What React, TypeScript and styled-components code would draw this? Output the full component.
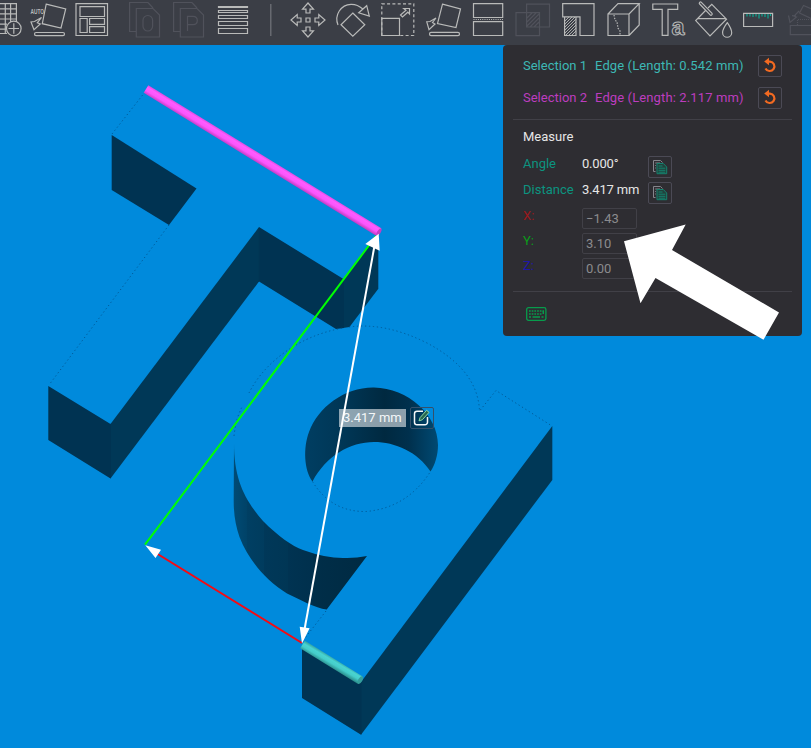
import React from "react";
import styled, { createGlobalStyle } from "styled-components";

const GlobalStyle = createGlobalStyle`
  * { box-sizing: border-box; }
  body { margin: 0; background: #008adc; overflow: hidden; font-family: Roboto, "Noto Sans", sans-serif; }
`;

const Screen = styled.div`
  width: 811px;
  height: 748px;
  display: flex;
  flex-direction: column;
  overflow: hidden;
`;

const Toolbar = styled.header`
  display: flex;
  flex: 0 0 45px;
  background: #3b3e46;
`;

const ToolIcon = styled.svg<{ $dim?: boolean; $gap?: number }>`
  flex: none;
  display: block;
  margin-left: ${(p) => p.$gap ?? 0}px;
  fill: none;
  stroke: ${(p) => (p.$dim ? "#50525b" : "#b9bab9")};
  stroke-width: 1.2;
  overflow: hidden;
`;

const Viewport = styled.main`
  position: relative;
  flex: 1;
  background: #008adc;
`;

const Scene = styled.svg`
  display: block;
`;

const Panel = styled.section`
  position: absolute;
  top: 0;
  left: 503px;
  width: 299px;
  height: 291px;
  padding: 10px 10px 0;
  background: #2e2d32;
  border-radius: 4px;
  color: #e6e6e6;
  font-size: 13px;
  line-height: 22px;
`;

const SelectionRow = styled.div<{ $color: string }>`
  display: flex;
  height: 22px;
  margin-bottom: 10px;
  padding: 0 10px;
  color: ${(p) => p.$color};
`;

const SelectionName = styled.span`
  width: 72px;
`;

const SelectionValue = styled.span`
  flex: 1;
  white-space: nowrap;
  letter-spacing: 0.12px;
`;

const IconButton = styled.button`
  display: grid;
  place-items: center;
  width: 24px;
  height: 22px;
  padding: 0;
  border: 1px solid #4b4a55;
  border-radius: 2px;
  background: transparent;
`;

const Divider = styled.div`
  height: 1px;
  background: #414047;
`;

const Title = styled.h2`
  margin: 6px 10px 5px;
  font-size: 13px;
  font-weight: 400;
  line-height: 22px;
`;

const MeasureRow = styled.div`
  display: grid;
  grid-template-columns: 59px 66px 24px;
  height: 26px;
  padding-left: 10px;
  ${IconButton} { margin-top: 3px; }
`;

const MeasureName = styled.span`
  color: #0c9480;
`;

const Value = styled.span`
  white-space: nowrap;
  letter-spacing: -0.2px;
`;

const AxisGroup = styled.div`
  padding: 3px 0 8px;
`;

const AxisRow = styled.div<{ $color: string }>`
  display: grid;
  grid-template-columns: 59px 55px;
  height: 25px;
  padding-left: 10px;
  color: ${(p) => p.$color};
`;

const AxisName = styled.span`
  line-height: 16px;
`;

const AxisInput = styled.div`
  height: 21px;
  padding-left: 3px;
  border: 1px solid #414047;
  border-radius: 2px;
  color: #8b8b8e;
  line-height: 20px;
`;

const Footer = styled.footer`
  padding: 15px 0 0 13px;
  svg { display: block; }
`;

const DistanceTag = styled.div`
  position: absolute;
  top: 362px;
  left: 339px;
  display: flex;
  align-items: center;
  gap: 4px;
`;

const DistanceText = styled.span`
  width: 67px;
  height: 18px;
  padding-left: 4px;
  background: rgba(255, 255, 255, 0.55);
  color: #f4f7f8;
  font-size: 13px;
  line-height: 17px;
  white-space: nowrap;
`;

const EditButton = styled(IconButton)`
  border-color: #35506a;
`;

const Overlay = styled.svg`
  position: absolute;
  inset: 0;
  pointer-events: none;
`;

function Tool(props: { x: number; w?: number; dim?: boolean; gap?: number; children: React.ReactNode }) {
  const w = props.w ?? 45;
  return (
    <ToolIcon width={w} height={45} viewBox={`${props.x} 0 ${w} 45`} $dim={props.dim} $gap={props.gap}>
      {props.children}
    </ToolIcon>
  );
}

function Tools() {
  return (
    <Toolbar>
      <Tool x={0} w={26}>
        <path d="M0 3.7H16.4V22M0 8.8H16M0 13.9H16M0 19H16M0 24.2H7M0 29.2H6M0 33.5H7M5.3 4V33M10.6 4V22" />
        <circle cx="13.8" cy="28.5" r="7.3" />
        <path d="M8.5 28.5H19M13.8 23.2V33.8" />
      </Tool>
      <Tool x={26}>
        <text x="30.5" y="14" fontSize="6.5" fontWeight="700" textLength="13.5" lengthAdjust="spacingAndGlyphs" fill="#b9bab9" stroke="none" fontFamily="Liberation Sans">AUTO</text>
        <path d="M46.2 4.2L65.7 9 61 28 42.3 23.7ZM31 22L34 29.7 40.3 24 37.3 22.8 41.5 17.5 34.5 21.5Z" />
        <rect x="34.5" y="32.5" width="30" height="3.2" rx="1.6" />
      </Tool>
      <Tool x={71}>
        <path d="M76 3.6H107.5V35.5H76ZM80 6.6H104.5V16.5H80ZM80 18.5H87.2V32.5H80ZM89.6 18.5H104.5V24.4H89.6ZM89.6 26.6H104.5V32.5H89.6Z" />
      </Tool>
      <Tool x={123} w={44} gap={7} dim>
        <path d="M136 31.5H129.6V2.5H148L153 8M136.3 8.5H153L159.5 15V37H136.3Z" />
        <rect x="143" y="15.5" width="9.6" height="15.5" rx="4.8" />
      </Tool>
      <Tool x={167} w={44} dim>
        <path d="M180 31.5H173.6V2.5H192L197 8M180.3 8.5H197L203.5 15V37H180.3ZM187.5 31V16.3H193Q197.3 16.3 197.3 20.4T193 24.6H187.5" />
      </Tool>
      <Tool x={211} w={44}>
        <path d="M218.5 6.5H247.5V7.5H218.5ZM218.5 10.5H247.5V12.5H218.5ZM218.5 15.5H247.5V18.5H218.5ZM218.5 21.5H247.5V25.5H218.5ZM218.5 28.5H247.5V33.5H218.5Z" />
      </Tool>
      <Tool x={255} w={31}>
        <path d="M270.8 4V36" stroke="#73757b" />
      </Tool>
      <Tool x={286}>
        <path d="M306 18H310V22H306ZM306 13V9.2H302.5L308 3 313.5 9.2H310V13ZM306 27V30.8H302.5L308 37 313.5 30.8H310V27ZM301 18H297.2V14.5L291 20 297.2 25.5V22H301ZM315 18H318.8V14.5L325 20 318.8 25.5V22H315Z" />
      </Tool>
      <Tool x={331}>
        <path d="M338 25C334 15 341 4.5 351 4.3 355 4.2 359 5.5 362.5 8.8M366.7 5.7L369.3 16 358.7 12.7ZM352.8 13L364.8 24.8 352.8 36.2 341 24.8Z" />
      </Tool>
      <Tool x={376}>
        <rect x="381.8" y="3.8" width="32" height="31.7" strokeDasharray="3 2.3" />
        <path d="M381.8 18.4H399.5V35.5H381.8ZM400.5 15L406 10.2 403.8 8.5H409.5V14L407.8 12.2 402.5 17Z" />
      </Tool>
      <Tool x={421}>
        <path d="M442.5 4.2L460.5 9 456 27.5 437.5 23.5ZM426.7 21.7L429 29.7 435 24 432.5 22.5 436 18 430 21.5Z" />
        <rect x="429.5" y="32.4" width="30" height="3.2" rx="1.6" />
      </Tool>
      <Tool x={466}>
        <path d="M473.5 3.7H502.7V17.5H473.5ZM473.5 21.6H502.7V35.5H473.5Z" />
        <path d="M473.5 19.5H503" strokeDasharray="1 1.2" />
      </Tool>
      <Tool x={511} dim>
        <path d="M516 12.7H539.5V35.6H516ZM526.6 4.2H549.5V27H526.6ZM527 18L532 13M527 22L536 13M527 26L539 14M530 27L539 18M534 27L539 22" />
      </Tool>
      <Tool x={556}>
        <path d="M562.7 3.7H594V35.5H580V16.8H562.7ZM564.6 16.8H576V35.5H564.6Z" />
        <path d="M565 21L569 17M565 24L572 17M565 27L575 17M565 30L576 19M565 33L576 22M566 35L576 25M569 35L576 28M572 35L576 31" strokeWidth=".9" />
      </Tool>
      <Tool x={601}>
        <path d="M608 14H629V35.5H608ZM608 14L618 3.7H639.2L629 14M639.2 3.7V25L629 35.5" />
        <path d="M614 15L615 20 617 22 618 28 620 31V35" strokeDasharray="1.5 1.3" />
      </Tool>
      <Tool x={646}>
        <path d="M652.8 4H677.7V9.3H668V35.3H662.2V9.3H652.8Z" />
        <text x="671.5" y="35.4" fontSize="23" fontWeight="700" fontFamily="Liberation Sans" textLength="13" lengthAdjust="spacingAndGlyphs" strokeWidth="1">a</text>
      </Tool>
      <Tool x={691}>
        <path d="M706 10L695.7 20.6 710 35.8 726.5 19.2 711.8 4.3 708 8M697.5 18.6H726M727.3 22.7Q731.7 29 731.7 32.7A4.5 4.5 0 0 1 722.6 32.7Q722.6 29 727.3 22.7Z" />
        <path d="M700.5 3.2L711 14" strokeWidth="3.6" strokeLinecap="round" />
        <path d="M700.5 3.2L711 14" stroke="#3b3e46" strokeWidth="1.2" strokeLinecap="round" />
      </Tool>
      <Tool x={736}>
        <path d="M743.6 13.4H772.6V26.5H743.6Z" />
        <path d="M747 14V16.5M750 14V16.5M753 14V17M756 14V16.5M759 14V18.5M762 14V16.5M765 14V17M768 14V18.5M770.5 14V16" stroke="#0aa892" />
      </Tool>
      <Tool x={781} w={30} dim>
        <path d="M811 34.7H790.3V25.5H811M811 8.6L803.5 5.5 799.5 13 811 18.5M788.5 15.5L790 22.5 796.5 17 794 16.2 799 11M796 16L792 15.7" />
        <path d="M797.5 25V19.5H811" strokeDasharray="1 1" />
      </Tool>
    </Toolbar>
  );
}

const OUTER_WALL =
  "M234 443C234 480 245 500 263 521C278 536 292 546 303 550Q325 558 343 558Q355 558.5 367 556L326.7 609.5C315 608 301 600 287 593.5C265 580 248 559 239.5 537Q233.5 520 233.7 500Z";
const HOLE_WALL =
  "M312.5 481.5C304 470 303 448 309 432C318 407 345 387 374 387.5C408 388 438 415 438 445C438 455 435 465 430.5 471.5C418 452 395 442 374 442C350 442 326 456 312.5 481.5Z";

function Model() {
  return (
    <Scene width="811" height="703" viewBox="0 45 811 703">
      <defs>
        <linearGradient id="outer" x1="234" x2="366" y1="0" y2="0" gradientUnits="userSpaceOnUse">
          <stop offset="0" stopColor="#004b75" />
          <stop offset=".1" stopColor="#004267" />
          <stop offset=".1" stopColor="#003f63" />
          <stop offset=".23" stopColor="#003c5e" />
          <stop offset=".23" stopColor="#003859" />
          <stop offset=".41" stopColor="#003655" />
          <stop offset=".41" stopColor="#003352" />
          <stop offset=".6" stopColor="#00304d" />
          <stop offset=".6" stopColor="#002e49" />
          <stop offset="1" stopColor="#002a42" />
        </linearGradient>
        <linearGradient id="hole">
          <stop offset="0" stopColor="#003e62" />
          <stop offset=".3" stopColor="#003655" />
          <stop offset=".6" stopColor="#002940" />
          <stop offset=".78" stopColor="#00304d" />
          <stop offset="1" stopColor="#004a73" />
        </linearGradient>
        <linearGradient id="magenta" x1="260" y1="165" x2="265.2" y2="156.5" gradientUnits="userSpaceOnUse">
          <stop offset="0" stopColor="#b93bbb" />
          <stop offset=".4" stopColor="#fc54fc" />
          <stop offset=".75" stopColor="#ff5cff" />
          <stop offset="1" stopColor="#d84adc" />
        </linearGradient>
        <linearGradient id="teal" x1="329" y1="667" x2="334" y2="658.5" gradientUnits="userSpaceOnUse">
          <stop offset="0" stopColor="#278584" />
          <stop offset=".45" stopColor="#45cdca" />
          <stop offset=".75" stopColor="#49d4d1" />
          <stop offset="1" stopColor="#38aaa8" />
        </linearGradient>
      </defs>
      <g fill="#003857">
        <path d="M259 227V281.5L110.5 478.5V424Z" />
        <path d="M343 279.4L378.3 233V288.7L349.5 327 343 328Z" />
        <path d="M361 682L552.3 426V480L361 734.7Z" />
      </g>
      <g fill="#003352">
        <path d="M111.7 135L196.5 188.5 169 225 111.7 190Z" />
        <path d="M48.3 386L110.5 424 111 423.4V478L110.5 478.5 48.3 440Z" />
        <path d="M259 227L343.5 279 344 278.4V328L336 329 259 281.5Z" />
        <path d="M302 646L361 682 361.5 681.5V734L361 734.7 302 698Z" />
      </g>
      <path d="M259 228V281" stroke="#003655" />
      <path d={OUTER_WALL} fill="url(#outer)" />
      <path d={HOLE_WALL} fill="url(#hole)" />
      <g fill="none" stroke="#00518a" strokeWidth=".8" strokeDasharray="1.3 2.7">
        <path d="M145 92L112 134M169 225L49 385" />
        <path d="M234 436Q236 418 242 407M249 393Q258 375 275 360Q304 335 343 328" />
        <path d="M349 327Q385 322 427 343Q478 370 479.5 411L496 390.5L552 426" />
        <path d="M312.5 481.5Q331 512 366 511.5Q407 508 430.5 471.5M326 611L305 638" />
      </g>
      <path d="M146 89L379 232.2" stroke="url(#magenta)" strokeWidth="9" />
      <ellipse cx="379" cy="232" rx="1.7" ry="4" transform="rotate(31 379 232)" fill="#c23fc4" />
      <path d="M302.5 644.5L360 680" stroke="url(#teal)" strokeWidth="9" />
      <ellipse cx="360.3" cy="680" rx="2" ry="4.3" transform="rotate(31 360 680)" fill="#349e9b" />
      <path d="M376 236L145 544.7" stroke="#00ff00" strokeWidth="2" />
      <path d="M302 643L156 553" stroke="#f60a12" strokeWidth="2" />
      <path d="M145.3 545.2L161 549.7 155.5 558ZM378.7 233.7L365.3 244 379.7 250.7ZM302 643.5L299.7 626.8 309.6 628.2Z" fill="#fff" />
    </Scene>
  );
}

function ResetIcon() {
  return (
    <svg width="16" height="18" viewBox="0 0 16 18">
      <path d="M6 4.6H8A4.7 4.7 0 1 1 3.5 11.4" fill="none" stroke="#f26a21" strokeWidth="2.2" />
      <path d="M7 .8V8.2L2.2 4.5Z" fill="#f26a21" />
    </svg>
  );
}

function CopyIcon() {
  return (
    <svg width="16" height="16" viewBox="0 0 16 16" fill="none">
      <path d="M3.5 12.5H1.5V1.5H8.5L10.5 3.5M3.2 4H8M3.2 6.5H4M3.2 9H4" stroke="#85858c" />
      <path d="M5 4.5H11.3L14.7 8V14.7H5Z" fill="#21423c" stroke="#14836f" />
      <path d="M6.5 7H10.5M6.5 9.2H13.3M6.5 11.3H13.3M6.5 13.2H13.3" stroke="#14836f" />
    </svg>
  );
}

function KeyboardIcon() {
  return (
    <svg width="21" height="14" viewBox="0 0 21 14" fill="none" stroke="#079c4c">
      <rect x=".7" y=".7" width="19.2" height="12.6" rx="1.8" strokeWidth="1.3" />
      <path d="M3 4H18M3 7H16.5" strokeWidth="1.5" strokeDasharray="1.7 1" />
      <path d="M3 10H5M6.5 10H14M15.5 10H17.5M17.3 4V7" strokeWidth="1.5" />
    </svg>
  );
}

function EditIcon() {
  return (
    <svg width="18" height="18" viewBox="0 0 18 18" fill="none">
      <path d="M10 2.3H4A2.5 2.5 0 0 0 1.5 4.8V13.2A2.5 2.5 0 0 0 4 15.7H12A2.5 2.5 0 0 0 14.5 13.2V8" stroke="#f4f6f8" strokeWidth="1.5" />
      <path d="M6 11.8L7 8.7 13.7 1.3 16 3.4 9.3 10.8Z" fill="#28664f" stroke="#8ed6a2" strokeWidth="1" />
    </svg>
  );
}

const selections = [
  { name: "Selection 1", value: "Edge (Length: 0.542 mm)", color: "#3db8b5" },
  { name: "Selection 2", value: "Edge (Length: 2.117 mm)", color: "#bd3dbf" },
];
const measures = [
  { name: "Angle", value: "0.000°" },
  { name: "Distance", value: "3.417 mm" },
];
const axes = [
  { name: "X:", value: "−1.43", color: "#9c181c" },
  { name: "Y:", value: "3.10", color: "#0a9c1a" },
  { name: "Z:", value: "0.00", color: "#1f17a8" },
];

export default function App() {
  return (
    <Screen>
      <GlobalStyle />
      <Tools />
      <Viewport>
        <Model />
        <DistanceTag>
          <DistanceText>3.417 mm</DistanceText>
          <EditButton aria-label="Edit distance"><EditIcon /></EditButton>
        </DistanceTag>
        <Panel>
          {selections.map((s) => (
            <SelectionRow key={s.name} $color={s.color}>
              <SelectionName>{s.name}</SelectionName>
              <SelectionValue>{s.value}</SelectionValue>
              <IconButton aria-label="Reset selection"><ResetIcon /></IconButton>
            </SelectionRow>
          ))}
          <Divider />
          <Title>Measure</Title>
          {measures.map((m) => (
            <MeasureRow key={m.name}>
              <MeasureName>{m.name}</MeasureName>
              <Value>{m.value}</Value>
              <IconButton aria-label="Copy value"><CopyIcon /></IconButton>
            </MeasureRow>
          ))}
          <AxisGroup>
            {axes.map((a) => (
              <AxisRow key={a.name} $color={a.color}>
                <AxisName>{a.name}</AxisName>
                <AxisInput>{a.value}</AxisInput>
              </AxisRow>
            ))}
          </AxisGroup>
          <Divider />
          <Footer><KeyboardIcon /></Footer>
        </Panel>
        <Overlay width="811" height="703" viewBox="0 45 811 703">
          <path d="M375 243L303.5 635" stroke="#fff" strokeWidth="2" />
          <path d="M624 241.3L685.7 224.5 672 250 779 312.5 763.5 339.7 655.5 278 640.5 303.3Z" fill="#fff" />
        </Overlay>
      </Viewport>
    </Screen>
  );
}
